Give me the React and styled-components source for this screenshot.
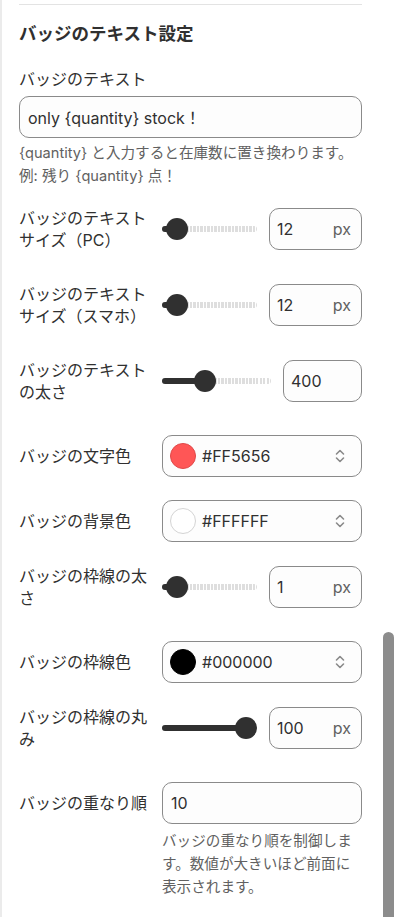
import styled, { createGlobalStyle } from "styled-components";

const GlobalStyle = createGlobalStyle`
  * { box-sizing: border-box; }
  body {
    margin: 0;
    background: #ffffff;
    font-family: "Inter", "Noto Sans CJK JP", sans-serif;
    color: #303030;
  }
`;

const Panel = styled.div`
  min-height: 917px;
  border-left: 2px solid #ebebeb;
  padding: 4px 32px 0 17px;
  overflow: hidden;
`;

const Divider = styled.div`
  height: 1px;
  background: #e3e3e3;
`;

const Heading = styled.h2`
  margin: 17px 0 0;
  font-size: 17.5px;
  line-height: 24px;
  font-weight: 700;
  color: #303030;
`;

const Field = styled.div`
  margin-top: 22px;
  display: flex;
  flex-direction: column;
`;

const FieldLabel = styled.div`
  font-size: 16px;
  line-height: 22px;
  color: #303030;
  margin-bottom: 6px;
`;

const TextInput = styled.div`
  height: 42px;
  display: flex;
  align-items: center;
  padding: 0 8px;
  border: 1px solid #8a8a8a;
  border-radius: 10px;
  background: #fdfdfd;
  font-size: 16px;
  color: #303030;
  white-space: nowrap;
`;

const Help = styled.div`
  margin-top: ${({ $gap }) => $gap || 4}px;
  font-size: 14.6px;
  line-height: 23px;
  color: #616161;
`;

const Rows = styled.div`
  margin-top: 19px;
  display: flex;
  flex-direction: column;
  gap: 23px;
`;

const Row = styled.div`
  display: grid;
  grid-template-columns: 135px 1fr;
  column-gap: 8px;
  align-items: ${({ $top }) => ($top ? "start" : "center")};
  margin-bottom: ${({ $slider }) => ($slider ? 9 : 0)}px;
`;

const Label = styled.div`
  font-size: 16px;
  line-height: 22px;
  color: #303030;
  min-height: ${({ $top }) => ($top ? "42px" : "auto")};
  display: flex;
  align-items: center;
`;

const Control = styled.div`
  display: flex;
  align-items: center;
  gap: 12px;
  min-width: 0;
`;

const Column = styled.div`
  display: flex;
  flex-direction: column;
`;

const Track = styled.div`
  position: relative;
  flex: 1;
  height: 24px;
  display: flex;
  align-items: center;
`;

const Rail = styled.div`
  width: 100%;
  height: 6px;
  border-radius: 3px;
  background: repeating-linear-gradient(
    90deg,
    #dedede 0 2px,
    transparent 2px 3.5px
  );
`;

const Fill = styled.div`
  position: absolute;
  left: 0;
  top: 9px;
  height: 6px;
  border-radius: 3px;
  background: #303030;
`;

const Thumb = styled.div`
  position: absolute;
  top: 1px;
  width: 22px;
  height: 22px;
  margin-left: -11px;
  border-radius: 50%;
  background: #303030;
`;

const NumberBox = styled.div`
  width: ${({ $unit }) => ($unit ? 93 : 79)}px;
  flex: none;
  height: 42px;
  display: flex;
  align-items: center;
  justify-content: space-between;
  padding: 0 10px 0 7px;
  border: 1px solid #8a8a8a;
  border-radius: 10px;
  background: #fdfdfd;
  font-size: 16px;
  color: #303030;
`;

const Unit = styled.span`
  color: #616161;
`;

const SelectBox = styled.div`
  flex: 1;
  height: 42px;
  display: flex;
  align-items: center;
  gap: 6px;
  padding: 0 15px 0 7px;
  border: 1px solid #8a8a8a;
  border-radius: 10px;
  background: #fdfdfd;
  font-size: 16px;
  color: #303030;
`;

const Swatch = styled.span`
  width: 26px;
  height: 26px;
  border-radius: 50%;
  flex: none;
  background: ${({ $color }) => $color};
  border: 1px solid ${({ $edge }) => $edge};
`;

const SelectText = styled.span`
  flex: 1;
`;

const Scrollbar = styled.div`
  position: fixed;
  right: 0;
  top: 632px;
  width: 11px;
  height: 300px;
  border-radius: 6px 6px 0 0;
  background: #8c8c8c;
`;

function Chevrons() {
  return (
    <svg width="12" height="18" viewBox="0 0 12 18" fill="none">
      <path
        d="M2.5 7 L6 3.5 L9.5 7"
        stroke="#8a8a8a"
        strokeWidth="1.6"
        strokeLinecap="round"
        strokeLinejoin="round"
      />
      <path
        d="M2.5 11 L6 14.5 L9.5 11"
        stroke="#8a8a8a"
        strokeWidth="1.6"
        strokeLinecap="round"
        strokeLinejoin="round"
      />
    </svg>
  );
}

function Slider({ value, min, max }) {
  const ratio = (value - min) / (max - min);
  // thumb sits a little in from the left end, flush with the right end
  const pos = `calc(15px + (100% - 26px) * ${ratio})`;
  return (
    <Track>
      <Rail />
      <Fill style={{ width: pos }} />
      <Thumb style={{ left: pos }} />
    </Track>
  );
}

function SliderRow({ label, value, min, max, unit }) {
  return (
    <Row $slider>
      <Label>{label}</Label>
      <Control>
        <Slider value={value} min={min} max={max} />
        <NumberBox $unit={!!unit}>
          <span>{value}</span>
          {unit && <Unit>{unit}</Unit>}
        </NumberBox>
      </Control>
    </Row>
  );
}

function ColorRow({ label, color, edge }) {
  return (
    <Row>
      <Label>{label}</Label>
      <Control>
        <SelectBox>
          <Swatch $color={color} $edge={edge} />
          <SelectText>{color}</SelectText>
          <Chevrons />
        </SelectBox>
      </Control>
    </Row>
  );
}

export default function App() {
  return (
    <>
      <GlobalStyle />
      <Panel>
        <Divider />
        <Heading>バッジのテキスト設定</Heading>
        <Field>
          <FieldLabel>バッジのテキスト</FieldLabel>
          <TextInput>only {"{quantity}"} stock！</TextInput>
          <Help>
            {"{quantity}"} と入力すると在庫数に置き換わります。
            <br />
            例: 残り {"{quantity}"} 点！
          </Help>
        </Field>
        <Rows>
          <SliderRow label="バッジのテキストサイズ（PC）" value={12} min={12} max={40} unit="px" />
          <SliderRow label="バッジのテキストサイズ（スマホ）" value={12} min={12} max={40} unit="px" />
          <SliderRow label="バッジのテキストの太さ" value={400} min={100} max={1000} />
          <ColorRow label="バッジの文字色" color="#FF5656" edge="#e04848" />
          <ColorRow label="バッジの背景色" color="#FFFFFF" edge="#d4d4d4" />
          <SliderRow label="バッジの枠線の太さ" value={1} min={1} max={10} unit="px" />
          <ColorRow label="バッジの枠線色" color="#000000" edge="#000000" />
          <SliderRow label="バッジの枠線の丸み" value={100} min={0} max={100} unit="px" />
          <Row $top>
            <Label $top>バッジの重なり順</Label>
            <Column>
              <TextInput>10</TextInput>
              <Help $gap={6}>
                バッジの重なり順を制御します。数値が大きいほど前面に表示されます。
              </Help>
            </Column>
          </Row>
        </Rows>
      </Panel>
      <Scrollbar />
    </>
  );
}
